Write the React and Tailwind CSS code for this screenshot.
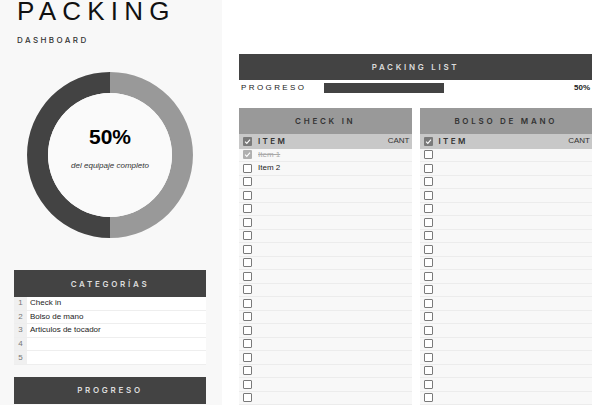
import React from 'react'

const checkIn = [
  { name: 'Item 1', done: true },
  { name: 'Item 2', done: false },
]

const categorias = ['Check in', 'Bolso de mano', 'Articulos de tocador', '', '']

function Box({ checked, faded }) {
  if (checked) {
    return (
      <span className={`w-[9px] h-[9px] flex items-center justify-center rounded-[1px] ${faded ? 'bg-[#b0b0b0]' : 'bg-[#7a7a7a]'}`}>
        <svg width="7" height="7" viewBox="0 0 10 10">
          <path d="M1.5 5.2 L4 7.6 L8.6 2.4" fill="none" stroke="#fff" strokeWidth="1.6" />
        </svg>
      </span>
    )
  }
  return <span className="w-[9px] h-[9px] border-[1.5px] border-[#7a7a7a] rounded-[1px] bg-white" />
}

function ListCard({ title, items }) {
  const rows = Array.from({ length: 19 }, (_, i) => items[i] || { name: '', done: false })
  return (
    <div className="flex flex-col">
      <div className="h-[26px] bg-[#999999] flex items-center justify-center text-[8px] font-semibold tracking-[0.34em] text-[#333] font-['Inter',sans-serif]">
        {title}
      </div>
      <div className="h-[15px] bg-[#c8c8c8] flex items-center pl-[4px] pr-[2px] text-[8px] text-[#333]">
        <Box checked />
        <span className="ml-[6px] font-semibold tracking-[0.3em] font-['Inter',sans-serif]">ITEM</span>
        <span className="ml-auto">CANT</span>
      </div>
      {rows.map((r, i) => (
        <div key={i} className="h-[13.5px] bg-[#f8f8f8] border-b border-[#ececec] flex items-center pl-[4px] text-[8px]">
          <Box checked={r.done} faded />
          <span className={`ml-[6px] ${r.done ? 'line-through text-[#aaa]' : 'text-[#222]'}`}>{r.name}</span>
        </div>
      ))}
    </div>
  )
}

export default function App() {
  return (
    <div className="w-[600px] h-[405px] overflow-hidden flex bg-white font-['Liberation_Sans',Arial,sans-serif]">
      {/* Left column */}
      <div className="w-[222px] shrink-0 bg-[#f8f8f8] flex flex-col px-[14px]">
        <div className="pl-[3px] text-[26px] leading-[23px] tracking-[0.24em] text-[#111]">PACKING</div>
        <div className="pl-[3px] mt-[11px] text-[8px] font-medium tracking-[0.3em] text-[#333] font-['Inter',sans-serif]">DASHBOARD</div>

        <div className="relative w-[166px] h-[166px] ml-[13px] mt-[26px]">
          <svg width="166" height="166" viewBox="0 0 166 166">
            <path d="M83 0 A83 83 0 0 1 83 166 L83 145 A62 62 0 0 0 83 21 Z" fill="#999999" />
            <path d="M83 0 A83 83 0 0 0 83 166 L83 145 A62 62 0 0 1 83 21 Z" fill="#434343" />
            <circle cx="83" cy="83" r="62" fill="#fafafa" />
          </svg>
          <div className="absolute inset-0 flex flex-col items-center justify-center">
            <div className="text-[21px] font-bold leading-none text-black mt-[-12px]">50%</div>
            <div className="text-[8px] italic text-[#333] mt-[13px]">del equipaje completo</div>
          </div>
        </div>

        <div className="mt-[32px] w-[192px]">
          <div className="h-[27px] bg-[#434343] flex items-center justify-center text-[8px] font-semibold tracking-[0.34em] text-[#ddd] font-['Inter',sans-serif]">
            CATEGORÍAS
          </div>
          {categorias.map((c, i) => (
            <div key={i} className="h-[13.6px] flex text-[8px] border-b border-[#eee]">
              <span className="w-[13px] bg-[#f0f0f0] text-[#777] flex items-center justify-center">{i + 1}</span>
              <span className="flex-1 bg-white flex items-center pl-[3px] text-[#222]">{c}</span>
            </div>
          ))}
          <div className="mt-[12px] h-[27px] bg-[#434343] flex items-center justify-center text-[8px] font-semibold tracking-[0.34em] text-[#ddd] font-['Inter',sans-serif]">
            PROGRESO
          </div>
        </div>
      </div>

      {/* Right area */}
      <div className="flex-1 flex flex-col pl-[17px] pr-[8px] pt-[54px]">
        <div className="h-[26px] bg-[#434343] flex items-center justify-center text-[8px] font-semibold tracking-[0.34em] text-[#ddd] font-['Inter',sans-serif]">
          PACKING LIST
        </div>
        <div className="h-[14px] flex items-center text-[8px] mt-[1px]">
          <span className="w-[85px] pl-[2px] tracking-[0.3em] text-[#222]">PROGRESO</span>
          <div className="w-[240px] h-[10px]">
            <div className="h-full bg-[#434343]" style={{ width: '50%' }} />
          </div>
          <span className="ml-auto pr-[2px] font-bold text-[8px] text-[#222]">50%</span>
        </div>
        <div className="mt-[13px] grid grid-cols-2 gap-[8px]">
          <ListCard title="CHECK IN" items={checkIn} />
          <ListCard title="BOLSO DE MANO" items={[]} />
        </div>
      </div>
    </div>
  )
}
